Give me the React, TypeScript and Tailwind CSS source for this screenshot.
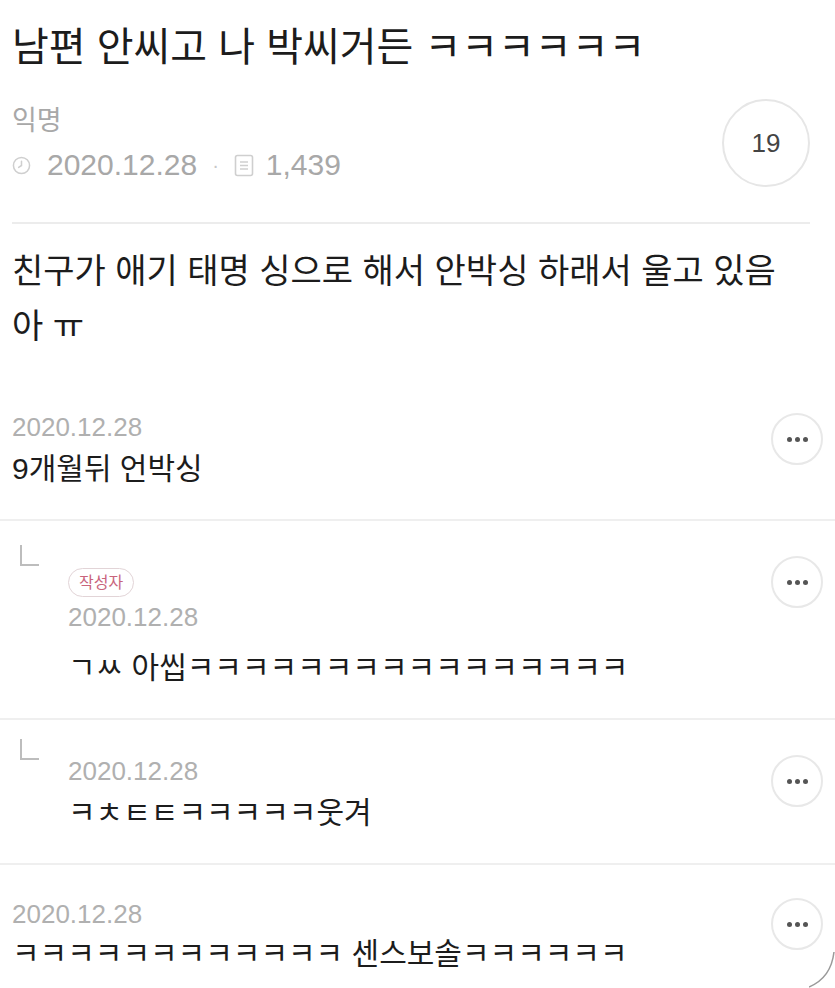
import React from 'react';

const FONT = "font-['Liberation_Sans','Noto_Sans_CJK_KR',sans-serif]";

function ClockIcon() {
  return (
    <svg width="19" height="19" viewBox="0 0 20 20" fill="none" stroke="#cfcfcf" strokeWidth="1.6">
      <circle cx="10" cy="10" r="8.5" />
      <path d="M10 5.5V10l-3 2" strokeLinecap="round" />
    </svg>
  );
}

function DocIcon() {
  return (
    <svg width="20" height="23" viewBox="0 0 20 23" fill="none" stroke="#cfcfcf" strokeWidth="1.6">
      <rect x="1.5" y="1.5" width="17" height="20" rx="2" />
      <path d="M6 8h8M6 11.5h8M6 15h8" />
    </svg>
  );
}

function ReplyMark() {
  return (
    <svg width="20" height="22" viewBox="0 0 20 22" fill="none" stroke="#bdbdbd" strokeWidth="2">
      <path d="M1 0v20h18" />
    </svg>
  );
}

function MoreButton({ className = '' }: { className?: string }) {
  return (
    <button className={`w-[52px] h-[52px] shrink-0 rounded-full border-2 border-[#e8e8e8] bg-white flex items-center justify-center gap-[3px] ${className}`}>
      <span className="w-[5px] h-[5px] rounded-full bg-[#555]" />
      <span className="w-[5px] h-[5px] rounded-full bg-[#555]" />
      <span className="w-[5px] h-[5px] rounded-full bg-[#555]" />
    </button>
  );
}

export default function App() {
  return (
    <div className={`relative w-[835px] h-[988px] overflow-hidden bg-white text-[#1c1c1c] ${FONT}`}>
      {/* Post header */}
      <div className="pl-3 pr-[25px] pt-[25px]">
        <h1 className="text-[40px] leading-[44px] font-normal">남편 안씨고 나 박씨거든 ㅋㅋㅋㅋㅋㅋ</h1>

        <div className="mt-[30px] flex items-center justify-between">
          <div className="flex flex-col gap-[10px] text-[#a8a8a8]">
            <div className="text-[27px] leading-[34px]">익명</div>
            <div className="flex items-center text-[30px] leading-[34px]">
              <ClockIcon />
              <span className="ml-[16px]">2020.12.28</span>
              <span className="mx-[15px] text-[20px] text-[#c8c8c8]">·</span>
              <DocIcon />
              <span className="ml-[12px]">1,439</span>
            </div>
          </div>
          <div className="w-[88px] h-[88px] rounded-full border-2 border-[#e6e6e6] flex items-center justify-center text-[26px] text-[#444]">
            19
          </div>
        </div>

        <div className="mt-[35px] h-[2px] bg-[#ececec]" />
      </div>

      {/* Post body */}
      <div className="px-3 pt-[20px] text-[34px] leading-[55px]">
        친구가 애기 태명 싱으로 해서 안박싱 하래서 울고 있음
        <br />
        아 ㅠ
      </div>

      {/* Comments */}
      <div className="flex items-start justify-between pl-3 pr-3 pt-[55px] pb-[30px] border-b-2 border-[#efefef]">
        <div>
          <div className="text-[26px] leading-[36px] text-[#b0b0b0]">2020.12.28</div>
          <div className="mt-[4px] text-[30px] leading-[40px]">9개월뒤 언박싱</div>
        </div>
        <MoreButton className="mt-[4px]" />
      </div>

      <div className="flex items-start pl-[20px] pr-3 pt-[24px] pb-[30px] border-b-2 border-[#efefef]">
        <ReplyMark />
        <div className="ml-[28px] mt-[23px] flex-1">
          <span className="inline-flex h-[29px] items-center rounded-full border-[1.5px] border-[#e2d4d7] px-[10px] text-[16px] text-[#c9647c]">
            작성자
          </span>
          <div className="mt-[3px] text-[26px] leading-[34px] text-[#b0b0b0]">2020.12.28</div>
          <div className="mt-[14px] text-[30px] leading-[40px]">ㄱㅆ 아씹ㅋㅋㅋㅋㅋㅋㅋㅋㅋㅋㅋㅋㅋㅋㅋㅋ</div>
        </div>
        <MoreButton className="mt-[11px]" />
      </div>

      <div className="flex items-start pl-[20px] pr-3 pt-[19px] pb-[30px] border-b-2 border-[#efefef]">
        <ReplyMark />
        <div className="ml-[28px] mt-[15px] flex-1">
          <div className="text-[26px] leading-[34px] text-[#b0b0b0]">2020.12.28</div>
          <div className="mt-[5px] text-[30px] leading-[40px]">ㅋㅊㅌㅌㅋㅋㅋㅋㅋ웃겨</div>
        </div>
        <MoreButton className="mt-[16px]" />
      </div>

      <div className="flex items-start justify-between pl-3 pr-3 pt-[31px]">
        <div>
          <div className="text-[26px] leading-[36px] text-[#b0b0b0]">2020.12.28</div>
          <div className="mt-[2px] text-[30px] leading-[40px]">ㅋㅋㅋㅋㅋㅋㅋㅋㅋㅋㅋㅋ 센스보솔ㅋㅋㅋㅋㅋㅋ</div>
        </div>
        <MoreButton className="mt-[2px]" />
      </div>

      {/* screen corner */}
      <svg className="absolute right-0 bottom-0" width="26" height="36" viewBox="0 0 26 36" fill="none">
        <path d="M25 0 Q22 26 0 35" stroke="#9a9a9a" strokeWidth="1.5" />
      </svg>
    </div>
  );
}
